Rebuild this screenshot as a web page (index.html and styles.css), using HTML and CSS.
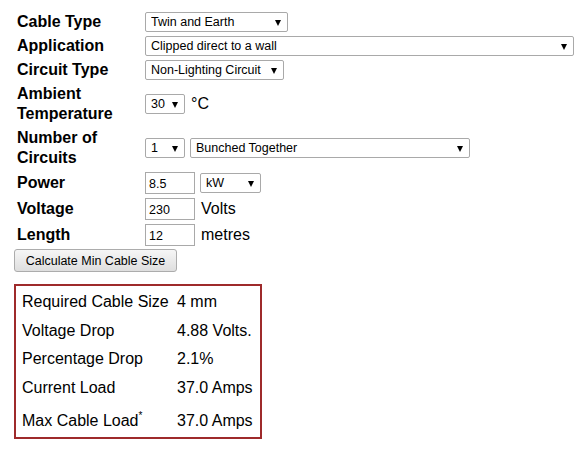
FILE: index.html
```html
<!DOCTYPE html>
<html>
<head>
<meta charset="utf-8">
<link rel="stylesheet" href="styles.css">
</head>
<body>
<div class="page">
  <div class="form">
    <div class="label">Cable Type</div>
    <div class="ctrl"><span class="sel w-cable"><select><option>Twin and Earth</option></select></span></div>

    <div class="label">Application</div>
    <div class="ctrl"><span class="sel w-app"><select><option>Clipped direct to a wall</option></select></span></div>

    <div class="label">Circuit Type</div>
    <div class="ctrl"><span class="sel w-circ"><select><option>Non-Lighting Circuit</option></select></span></div>

    <div class="label">Ambient Temperature</div>
    <div class="ctrl"><span class="sel w-small"><select><option>30</option></select></span><span class="unit">°C</span></div>

    <div class="label">Number of Circuits</div>
    <div class="ctrl"><span class="sel w-small"><select><option>1</option></select></span><span class="sel w-bunch gap"><select><option>Bunched Together</option></select></span></div>

    <div class="label">Power</div>
    <div class="ctrl"><input class="num" type="text" value="8.5"><span class="sel w-kw gap"><select><option>kW</option></select></span></div>

    <div class="label">Voltage</div>
    <div class="ctrl"><input class="num" type="text" value="230"><span class="unit">Volts</span></div>

    <div class="label">Length</div>
    <div class="ctrl"><input class="num" type="text" value="12"><span class="unit">metres</span></div>
  </div>

  <button class="calc">Calculate Min Cable Size</button>

  <div class="result">
    <div class="rlabel">Required Cable Size</div><div class="rval">4 mm</div>
    <div class="rlabel">Voltage Drop</div><div class="rval">4.88 Volts.</div>
    <div class="rlabel">Percentage Drop</div><div class="rval">2.1%</div>
    <div class="rlabel">Current Load</div><div class="rval">37.0 Amps</div>
    <div class="rlabel last">Max Cable Load<sup class="star">*</sup></div><div class="rval last">37.0 Amps</div>
  </div>
</div>
</body>
</html>
```

FILE: styles.css
```css
html, body {
  margin: 0;
  padding: 0;
  background: #ffffff;
}

body {
  font-family: "Liberation Sans", Arial, sans-serif;
  color: #000000;
}

.page {
  padding: 11px 0 0 14px;
}

.form {
  display: grid;
  grid-template-columns: 130px 1fr;
  row-gap: 2px;
  align-items: center;
}

.label {
  font-weight: bold;
  font-size: 16px;
  line-height: 20px;
  padding: 1px 0 1px 3px;
  width: 120px;
}

.ctrl {
  display: flex;
  align-items: center;
  padding: 1px 0 1px 1px;
}

.sel {
  position: relative;
  display: inline-block;
  height: 20px;
}

.sel select {
  -webkit-appearance: none;
  appearance: none;
  box-sizing: border-box;
  width: 100%;
  height: 20px;
  margin: 0;
  border: 1px solid #a9a9a9;
  border-radius: 2px;
  background: #ffffff;
  font-family: "Liberation Sans", Arial, sans-serif;
  font-size: 12.5px;
  color: #000000;
  padding: 0 16px 0 5px;
  outline: none;
}

.sel::after {
  content: "";
  position: absolute;
  top: 8px;
  right: 7px;
  width: 0;
  height: 0;
  border-left: 3.5px solid transparent;
  border-right: 3.5px solid transparent;
  border-top: 6px solid #000000;
  pointer-events: none;
}

.w-cable { width: 143px; }
.w-app { width: 429px; }
.w-circ { width: 139px; }
.w-small { width: 40px; }
.w-bunch { width: 280px; }
.w-kw { width: 61px; }

.gap { margin-left: 5px; }

.unit {
  font-size: 16px;
  margin-left: 6px;
}

.num {
  box-sizing: border-box;
  width: 50px;
  height: 22px;
  margin: 0;
  border: 1px solid #a9a9a9;
  padding: 2px 3px 0 3px;
  font-family: "Liberation Sans", Arial, sans-serif;
  font-size: 12.5px;
  color: #000000;
  outline: none;
}

.calc {
  display: block;
  box-sizing: border-box;
  width: 163px;
  height: 23px;
  margin: 2px 0 0 0;
  padding: 0;
  border: 1px solid #acacac;
  border-radius: 3px;
  background: linear-gradient(#f6f6f6, #dedede);
  font-family: "Liberation Sans", Arial, sans-serif;
  font-size: 12.5px;
  color: #000000;
}

.result {
  box-sizing: border-box;
  width: 248px;
  margin-top: 12px;
  border: 2px solid #9e2a2b;
  padding: 1.5px 6px 1.5px 6px;
  display: grid;
  grid-template-columns: 155px auto;
  font-size: 16px;
  line-height: 18px;
}

.rlabel, .rval {
  padding: 5.4px 0;
  white-space: nowrap;
}

.last {
  padding-top: 9.5px;
}

.star {
  font-size: 10px;
  line-height: 0;
  vertical-align: 7px;
}
```
